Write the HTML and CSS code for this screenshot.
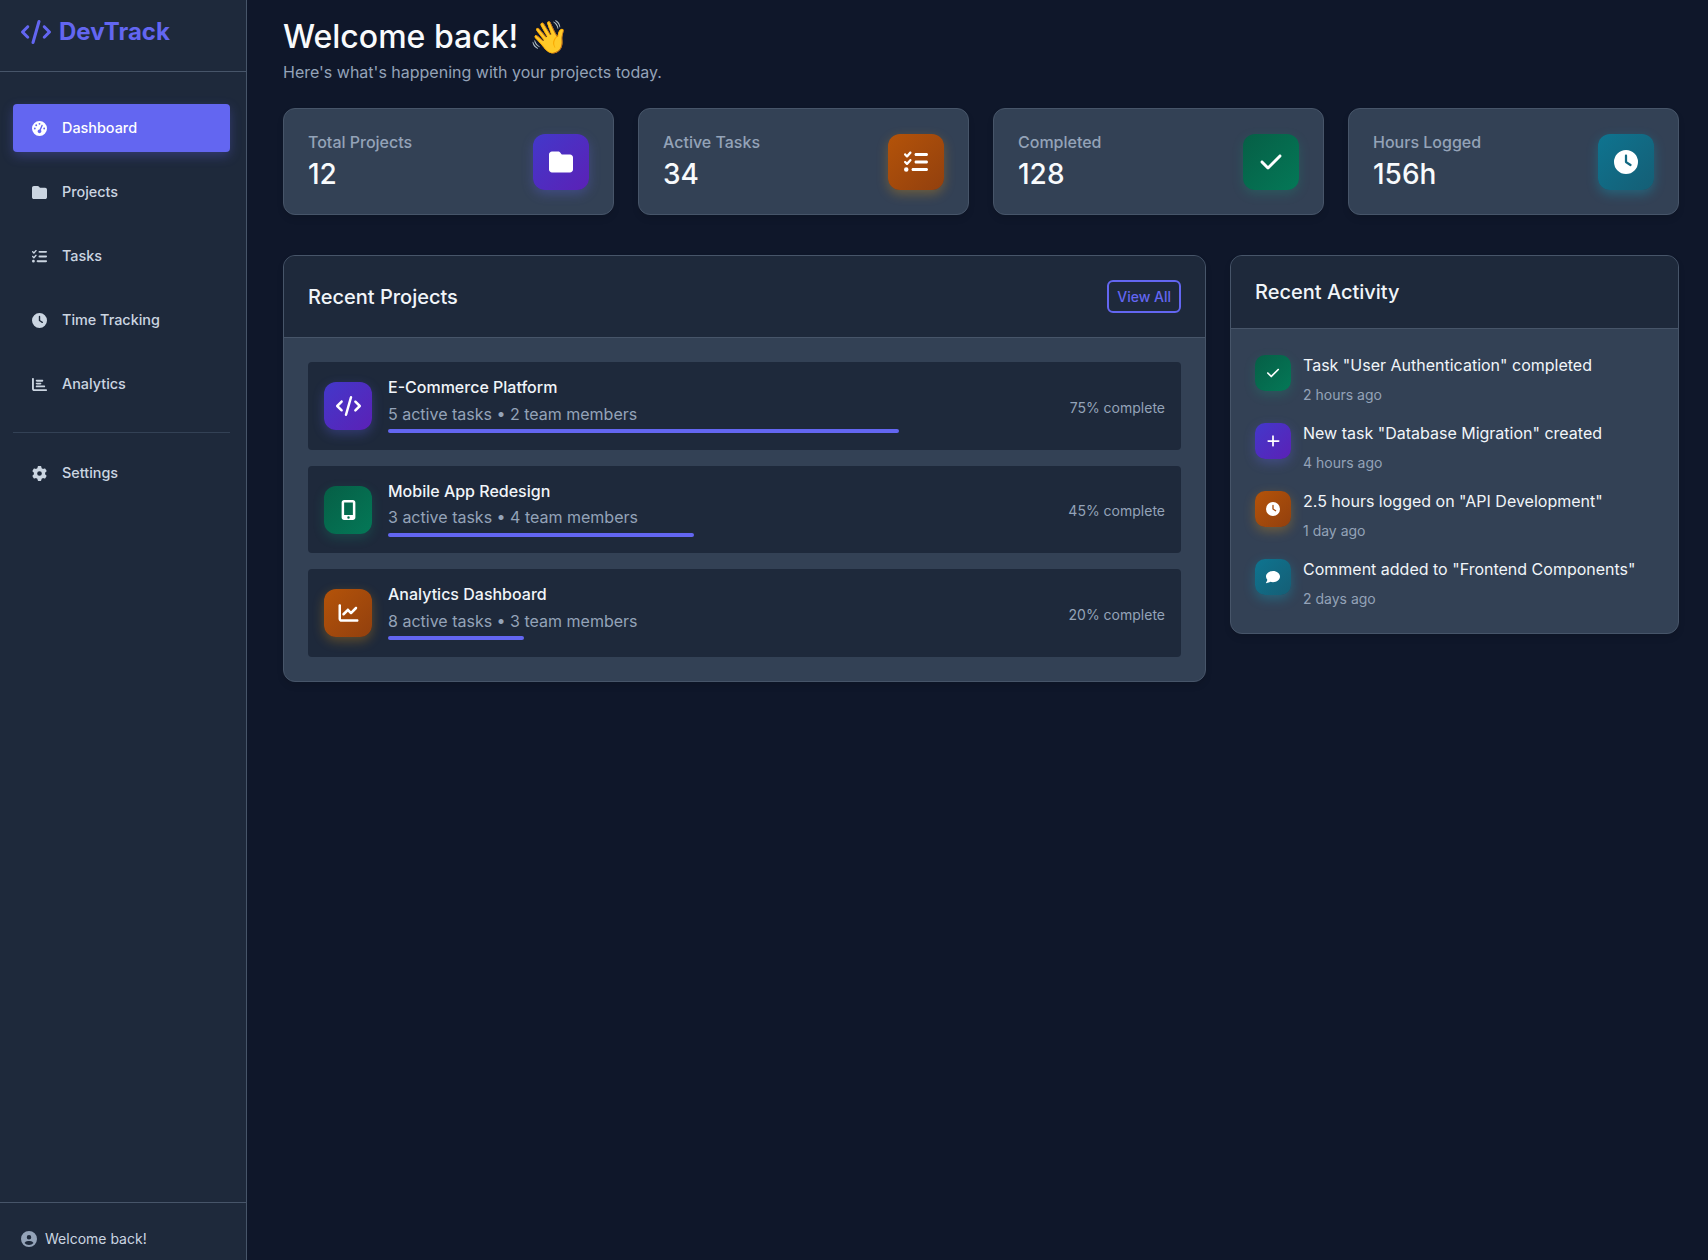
FILE: index.html
```html
<!DOCTYPE html>
<html lang="en">
<head>
    <meta charset="UTF-8">
    <meta name="viewport" content="width=device-width, initial-scale=1.0">
    <title>DevTrack</title>
    <link rel="stylesheet" href="styles.css">
</head>
<body>

<svg class="sprite" aria-hidden="true">
    <symbol id="i-code" viewBox="0 0 640 512"><path d="M392.8 1.2c-17-4.9-34.7 5-39.6 22l-128 448c-4.9 17 5 34.7 22 39.6s34.7-5 39.6-22l128-448c4.9-17-5-34.7-22-39.6zm80.6 120.1c-12.5 12.5-12.5 32.8 0 45.3L562.7 256l-89.4 89.4c-12.5 12.5-12.5 32.8 0 45.3s32.8 12.5 45.3 0l112-112c12.5-12.5 12.5-32.8 0-45.3l-112-112c-12.5-12.5-32.8-12.5-45.3 0zm-306.7 0c-12.5-12.5-32.8-12.5-45.3 0l-112 112c-12.5 12.5-12.5 32.8 0 45.3l112 112c12.5 12.5 32.8 12.5 45.3 0s12.5-32.8 0-45.3L77.3 256l89.4-89.4c12.5-12.5 12.5-32.8 0-45.3z"/></symbol>
    <symbol id="i-gauge" viewBox="0 0 512 512"><path d="M0 256a256 256 0 1 1 512 0A256 256 0 1 1 0 256zM288 96a32 32 0 1 0 -64 0 32 32 0 1 0 64 0zM256 416c35.3 0 64-28.7 64-64c0-17.4-6.9-33.1-18.1-44.6L366 161.7c5.3-12.1-.2-26.3-12.3-31.6s-26.3 .2-31.6 12.3L257.9 288c-.6 0-1.3 0-1.9 0c-35.3 0-64 28.7-64 64s28.7 64 64 64zM176 144a32 32 0 1 0 -64 0 32 32 0 1 0 64 0zM96 288a32 32 0 1 0 0-64 32 32 0 1 0 0 64zm352-32a32 32 0 1 0 -64 0 32 32 0 1 0 64 0z"/></symbol>
    <symbol id="i-folder" viewBox="0 0 512 512"><path d="M64 480H448c35.3 0 64-28.7 64-64V160c0-35.3-28.7-64-64-64H288c-10.1 0-19.6-4.7-25.6-12.8L243.2 57.6C231.1 41.5 212.1 32 192 32H64C28.7 32 0 60.7 0 96V416c0 35.3 28.7 64 64 64z"/></symbol>
    <symbol id="i-tasks" viewBox="0 0 512 512"><path d="M152.1 38.2c9.9 8.9 10.7 24 1.8 33.9l-72 80c-4.4 4.9-10.6 7.8-17.2 7.9s-12.9-2.4-17.6-7L7 113C-2.3 103.6-2.3 88.4 7 79s24.6-9.4 33.9 0l22.1 22.1 55.1-61.2c8.9-9.9 24-10.7 33.9-1.8zm0 160c9.9 8.9 10.7 24 1.8 33.9l-72 80c-4.4 4.9-10.6 7.8-17.2 7.9s-12.9-2.4-17.6-7L7 273c-9.4-9.4-9.4-24.6 0-33.9s24.6-9.4 33.9 0l22.1 22.1 55.1-61.2c8.9-9.9 24-10.7 33.9-1.8zM224 96c0-17.7 14.3-32 32-32H480c17.7 0 32 14.3 32 32s-14.3 32-32 32H256c-17.7 0-32-14.3-32-32zm0 160c0-17.7 14.3-32 32-32H480c17.7 0 32 14.3 32 32s-14.3 32-32 32H256c-17.7 0-32-14.3-32-32zM160 416c0-17.7 14.3-32 32-32H480c17.7 0 32 14.3 32 32s-14.3 32-32 32H192c-17.7 0-32-14.3-32-32zM48 368a48 48 0 1 1 0 96 48 48 0 1 1 0-96z"/></symbol>
    <symbol id="i-clock" viewBox="0 0 512 512"><path d="M256 0a256 256 0 1 1 0 512A256 256 0 1 1 256 0zM232 120V256c0 8 4 15.5 10.7 20l96 64c11 7.4 25.9 4.4 33.3-6.7s4.4-25.9-6.7-33.3L280 243.2V120c0-13.3-10.7-24-24-24s-24 10.7-24 24z"/></symbol>
    <symbol id="i-bars" viewBox="0 0 512 512"><path d="M32 32c17.7 0 32 14.3 32 32V400c0 8.8 7.2 16 16 16H480c17.7 0 32 14.3 32 32s-14.3 32-32 32H80c-44.2 0-80-35.8-80-80V64C0 46.3 14.3 32 32 32zm96 96c0-17.7 14.3-32 32-32l192 0c17.7 0 32 14.3 32 32s-14.3 32-32 32l-192 0c-17.7 0-32-14.3-32-32zm32 64H288c17.7 0 32 14.3 32 32s-14.3 32-32 32H160c-17.7 0-32-14.3-32-32s14.3-32 32-32zm0 96H416c17.7 0 32 14.3 32 32s-14.3 32-32 32H160c-17.7 0-32-14.3-32-32s14.3-32 32-32z"/></symbol>
    <symbol id="i-gear" viewBox="0 0 512 512"><path d="M495.9 166.6c3.2 8.7 .5 18.4-6.4 24.6l-43.3 39.4c1.1 8.3 1.7 16.8 1.7 25.4s-.6 17.1-1.7 25.4l43.3 39.4c6.9 6.2 9.6 15.9 6.4 24.6c-4.4 11.9-9.7 23.3-15.8 34.3l-4.7 8.1c-6.6 11-14 21.4-22.1 31.2c-5.9 7.2-15.7 9.6-24.5 6.8l-55.7-17.7c-13.4 10.3-28.2 18.9-44 25.4l-12.5 57.1c-2 9.1-9 16.3-18.2 17.8c-13.8 2.3-28 3.5-42.5 3.5s-28.7-1.2-42.5-3.5c-9.2-1.5-16.2-8.7-18.2-17.8l-12.5-57.1c-15.8-6.5-30.6-15.1-44-25.4L83.1 425.9c-8.8 2.8-18.6 .3-24.5-6.8c-8.1-9.8-15.5-20.2-22.1-31.2l-4.7-8.1c-6.1-11-11.4-22.4-15.8-34.3c-3.2-8.7-.5-18.4 6.4-24.6l43.3-39.4C64.6 273.1 64 264.6 64 256s.6-17.1 1.7-25.4L22.4 191.2c-6.9-6.2-9.6-15.9-6.4-24.6c4.4-11.9 9.7-23.3 15.8-34.3l4.7-8.1c6.6-11 14-21.4 22.1-31.2c5.9-7.2 15.7-9.6 24.5-6.8l55.7 17.7c13.4-10.3 28.2-18.9 44-25.4l12.5-57.1c2-9.1 9-16.3 18.2-17.8C227.3 1.2 241.5 0 256 0s28.7 1.2 42.5 3.5c9.2 1.5 16.2 8.7 18.2 17.8l12.5 57.1c15.8 6.5 30.6 15.1 44 25.4l55.7-17.7c8.8-2.8 18.6-.3 24.5 6.8c8.1 9.8 15.5 20.2 22.1 31.2l4.7 8.1c6.1 11 11.4 22.4 15.8 34.3zM256 336a80 80 0 1 0 0-160 80 80 0 1 0 0 160z"/></symbol>
    <symbol id="i-user" viewBox="0 0 512 512"><path d="M399 384.2C376.9 345.8 335.4 320 288 320H224c-47.4 0-88.9 25.8-111 64.2c35.2 39.2 86.2 63.8 143 63.8s107.8-24.7 143-63.8zM0 256a256 256 0 1 1 512 0A256 256 0 1 1 0 256zm256 16a72 72 0 1 0 0-144 72 72 0 1 0 0 144z"/></symbol>
    <symbol id="i-check" viewBox="0 0 448 512"><path d="M438.6 105.4c12.5 12.5 12.5 32.8 0 45.3l-256 256c-12.5 12.5-32.8 12.5-45.3 0l-128-128c-12.5-12.5-12.5-32.8 0-45.3s32.8-12.5 45.3 0L160 338.7 393.4 105.4c12.5-12.5 32.8-12.5 45.3 0z"/></symbol>
    <symbol id="i-mobile" viewBox="0 0 384 512"><path d="M16 64C16 28.7 44.7 0 80 0H304c35.3 0 64 28.7 64 64V448c0 35.3-28.7 64-64 64H80c-35.3 0-64-28.7-64-64V64zM224 448a32 32 0 1 0 -64 0 32 32 0 1 0 64 0zM304 64H80V384H304V64z"/></symbol>
    <symbol id="i-chart" viewBox="0 0 512 512"><path d="M64 64c0-17.7-14.3-32-32-32S0 46.3 0 64V400c0 44.2 35.8 80 80 80H480c17.7 0 32-14.3 32-32s-14.3-32-32-32H80c-8.8 0-16-7.2-16-16V64zm406.6 86.6c12.5-12.5 12.5-32.8 0-45.3s-32.8-12.5-45.3 0L320 210.7l-57.4-57.4c-12.5-12.5-32.8-12.5-45.3 0l-112 112c-12.5 12.5-12.5 32.8 0 45.3s32.8 12.5 45.3 0L240 221.3l57.4 57.4c12.5 12.5 32.8 12.5 45.3 0l128-128z"/></symbol>
    <symbol id="i-plus" viewBox="0 0 448 512"><path d="M256 80c0-17.7-14.3-32-32-32s-32 14.3-32 32V224H48c-17.7 0-32 14.3-32 32s14.3 32 32 32H192V432c0 17.7 14.3 32 32 32s32-14.3 32-32V288H432c17.7 0 32-14.3 32-32s-14.3-32-32-32H256V80z"/></symbol>
    <symbol id="i-comment" viewBox="0 0 512 512"><path d="M512 240c0 114.9-114.6 208-256 208c-37.1 0-72.3-6.4-104.1-17.9c-11.9 8.7-31.3 20.6-54.3 30.6C73.6 471.1 44.7 480 16 480c-6.5 0-12.3-3.9-14.8-9.9c-2.5-6-1.1-12.8 3.4-17.4l.3-.3c.3-.3 .7-.7 1.3-1.4c1.1-1.2 2.8-3.1 4.9-5.7c4.1-5 9.6-12.4 15.2-21.6c10-16.6 19.5-38.4 21.4-62.9C17.7 326.8 0 285.1 0 240C0 125.1 114.6 32 256 32s256 93.1 256 208z"/></symbol>
</svg>

<aside class="sidebar">
    <div class="sidebar-header">
        <svg class="logo-icon"><use href="#i-code"/></svg>
        <span class="logo-text">DevTrack</span>
    </div>

    <nav class="nav">
        <a class="nav-item active"><svg class="nav-icon"><use href="#i-gauge"/></svg>Dashboard</a>
        <a class="nav-item"><svg class="nav-icon"><use href="#i-folder"/></svg>Projects</a>
        <a class="nav-item"><svg class="nav-icon"><use href="#i-tasks"/></svg>Tasks</a>
        <a class="nav-item"><svg class="nav-icon"><use href="#i-clock"/></svg>Time Tracking</a>
        <a class="nav-item"><svg class="nav-icon"><use href="#i-bars"/></svg>Analytics</a>
        <div class="nav-divider"></div>
        <a class="nav-item"><svg class="nav-icon"><use href="#i-gear"/></svg>Settings</a>
    </nav>

    <div class="sidebar-footer">
        <svg class="footer-icon"><use href="#i-user"/></svg>
        <span>Welcome back!</span>
    </div>
</aside>

<main class="main">
    <h1 class="page-title">Welcome back! <span class="wave">👋</span></h1>
    <p class="page-subtitle">Here's what's happening with your projects today.</p>

    <section class="stats">
        <div class="stat-card">
            <div>
                <div class="stat-label">Total Projects</div>
                <div class="stat-value">12</div>
            </div>
            <div class="stat-icon purple"><svg class="icon-24"><use href="#i-folder"/></svg></div>
        </div>
        <div class="stat-card">
            <div>
                <div class="stat-label">Active Tasks</div>
                <div class="stat-value">34</div>
            </div>
            <div class="stat-icon orange"><svg class="icon-24"><use href="#i-tasks"/></svg></div>
        </div>
        <div class="stat-card">
            <div>
                <div class="stat-label">Completed</div>
                <div class="stat-value">128</div>
            </div>
            <div class="stat-icon green"><svg class="icon-24"><use href="#i-check"/></svg></div>
        </div>
        <div class="stat-card">
            <div>
                <div class="stat-label">Hours Logged</div>
                <div class="stat-value">156h</div>
            </div>
            <div class="stat-icon teal"><svg class="icon-24"><use href="#i-clock"/></svg></div>
        </div>
    </section>

    <section class="columns">
        <div class="panel">
            <div class="panel-header">
                <h2 class="panel-title with-action">Recent Projects</h2>
                <button class="btn-outline">View All</button>
            </div>
            <div class="panel-body project-list">
                <div class="project-row">
                    <div class="project-icon purple"><svg class="icon-20"><use href="#i-code"/></svg></div>
                    <div class="project-info">
                        <div class="project-name">E-Commerce Platform</div>
                        <div class="project-meta">5 active tasks • 2 team members</div>
                        <div class="progress"><div class="progress-fill" style="width: 75%"></div></div>
                    </div>
                    <div class="project-percent">75% complete</div>
                </div>
                <div class="project-row">
                    <div class="project-icon green"><svg class="icon-20"><use href="#i-mobile"/></svg></div>
                    <div class="project-info">
                        <div class="project-name">Mobile App Redesign</div>
                        <div class="project-meta">3 active tasks • 4 team members</div>
                        <div class="progress"><div class="progress-fill" style="width: 45%"></div></div>
                    </div>
                    <div class="project-percent">45% complete</div>
                </div>
                <div class="project-row">
                    <div class="project-icon orange"><svg class="icon-20"><use href="#i-chart"/></svg></div>
                    <div class="project-info">
                        <div class="project-name">Analytics Dashboard</div>
                        <div class="project-meta">8 active tasks • 3 team members</div>
                        <div class="progress"><div class="progress-fill" style="width: 20%"></div></div>
                    </div>
                    <div class="project-percent">20% complete</div>
                </div>
            </div>
        </div>

        <div class="panel">
            <div class="panel-header">
                <h2 class="panel-title">Recent Activity</h2>
            </div>
            <div class="panel-body activity-list">
                <div class="activity-item">
                    <div class="activity-icon green"><svg class="icon-14"><use href="#i-check"/></svg></div>
                    <div>
                        <div class="activity-text">Task "User Authentication" completed</div>
                        <div class="activity-time">2 hours ago</div>
                    </div>
                </div>
                <div class="activity-item">
                    <div class="activity-icon purple"><svg class="icon-14"><use href="#i-plus"/></svg></div>
                    <div>
                        <div class="activity-text">New task "Database Migration" created</div>
                        <div class="activity-time">4 hours ago</div>
                    </div>
                </div>
                <div class="activity-item">
                    <div class="activity-icon orange"><svg class="icon-14"><use href="#i-clock"/></svg></div>
                    <div>
                        <div class="activity-text">2.5 hours logged on "API Development"</div>
                        <div class="activity-time">1 day ago</div>
                    </div>
                </div>
                <div class="activity-item">
                    <div class="activity-icon teal"><svg class="icon-14"><use href="#i-comment"/></svg></div>
                    <div>
                        <div class="activity-text">Comment added to "Frontend Components"</div>
                        <div class="activity-time">2 days ago</div>
                    </div>
                </div>
            </div>
        </div>
    </section>
</main>

</body>
</html>
```

FILE: styles.css
```css
/* page */
* {
    box-sizing: border-box;
}

body {
    margin: 0;
    height: 100vh;
    display: flex;
    overflow: hidden;
    font-family: Inter, "Noto Sans", sans-serif;
    line-height: 1.6;
    background-color: #0f172a;
    color: #f1f5f9;
}

.sprite {
    display: none;
}

svg {
    fill: currentColor;
    flex-shrink: 0;
}

/* sidebar */
.sidebar {
    width: 247px;
    flex-shrink: 0;
    display: flex;
    flex-direction: column;
    background-color: #1e293b;
    border-right: 1px solid #475569;
}

.sidebar-header {
    display: flex;
    align-items: center;
    gap: 8px;
    height: 72px;
    padding: 0 20px 7px 21px;
    border-bottom: 1px solid #475569;
    color: #6366f1;
}

.logo-icon {
    width: 30px;
    height: 24px;
}

.logo-text {
    font-size: 24px;
    font-weight: 700;
}

.nav {
    padding: 32px 16px 0 13px;
}

.nav-item {
    display: flex;
    align-items: center;
    gap: 15px;
    height: 48px;
    margin-bottom: 16px;
    padding: 0 19px;
    border-radius: 4px;
    font-size: 14.4px;
    font-weight: 500;
    color: #cbd5e1;
}

.nav-item.active {
    background-color: #6366f1;
    color: #fff;
    box-shadow: 0 4px 12px rgba(99, 102, 241, 0.3);
}

.nav-icon {
    width: 15px;
    height: 15px;
}

.nav-divider {
    height: 1px;
    margin: 24px 0 16px;
    background-color: #334155;
}

.sidebar-footer {
    margin-top: auto;
    display: flex;
    align-items: center;
    gap: 8px;
    height: 58px;
    padding: 15px 21px 0;
    border-top: 1px solid #475569;
    font-size: 14px;
    color: #cbd5e1;
}

.footer-icon {
    width: 16px;
    height: 16px;
    color: #94a3b8;
}

/* main area */
.main {
    flex: 1;
    min-width: 0;
    padding: 11px 29px 0 36px;
}

.page-title {
    margin: 0 0 -2px;
    font-size: 32px;
    font-weight: 500;
    line-height: 1.6;
    color: #f8fafc;
}

.wave {
    margin-left: 2px;
}

.page-subtitle {
    margin: 0 0 22.4px;
    font-size: 16px;
    color: #94a3b8;
}

/* stat cards */
.stats {
    display: grid;
    grid-template-columns: repeat(4, 1fr);
    gap: 24px;
    margin-bottom: 39.8px;
}

.stat-card {
    display: flex;
    justify-content: space-between;
    align-items: flex-start;
    padding: 25px 24px 24px;
    background-color: #334155;
    border: 1px solid #475569;
    border-radius: 12px;
    box-shadow: 0 4px 6px rgba(0, 0, 0, 0.1);
}

.stat-label {
    font-size: 16px;
    font-weight: 500;
    line-height: 16px;
    color: #94a3b8;
}

.stat-value {
    margin: 6px 0 -2px;
    font-size: 28px;
    font-weight: 500;
    line-height: 36px;
    color: #f8fafc;
}

.stat-icon,
.project-icon,
.activity-icon {
    display: flex;
    align-items: center;
    justify-content: center;
    flex-shrink: 0;
    color: #fff;
}

.stat-icon {
    width: 56px;
    height: 56px;
    border-radius: 12px;
}

.icon-24 {
    width: 24px;
    height: 24px;
}

.icon-20 {
    width: 25px;
    height: 20px;
}

.icon-14 {
    width: 14px;
    height: 14px;
}

/* accent colours */
.purple {
    background: linear-gradient(135deg, #4338ca, #5b21b6);
    box-shadow: 0 4px 12px rgba(99, 102, 241, 0.3);
}

.green {
    background: linear-gradient(135deg, #065f46, #047857);
    box-shadow: 0 4px 12px rgba(16, 185, 129, 0.2);
}

.orange {
    background: linear-gradient(135deg, #b45309, #92400e);
    box-shadow: 0 4px 12px rgba(245, 158, 11, 0.3);
}

.teal {
    background: linear-gradient(135deg, #0e7490, #155e75);
    box-shadow: 0 4px 12px rgba(6, 182, 212, 0.3);
}

/* panels */
.columns {
    display: grid;
    grid-template-columns: 1fr 449px;
    gap: 24px;
    align-items: start;
}

.panel {
    background-color: #334155;
    border: 1px solid #475569;
    border-radius: 12px;
    overflow: hidden;
    box-shadow: 0 4px 6px rgba(0, 0, 0, 0.1);
}

.panel-header {
    display: flex;
    justify-content: space-between;
    align-items: center;
    padding: 24px;
    background-color: #1e293b;
    border-bottom: 1px solid #475569;
}

.panel-title {
    margin: 0;
    font-size: 20px;
    font-weight: 500;
    line-height: 24px;
    color: #f1f5f9;
}

.panel-title.with-action {
    padding-top: 2px;
}

.btn-outline {
    height: 33px;
    padding: 0 8px;
    background: transparent;
    border: 2px solid #6366f1;
    border-radius: 6px;
    font-family: inherit;
    font-size: 14px;
    font-weight: 500;
    color: #6366f1;
}

.panel-body {
    padding: 24px;
}

/* projects */
.project-list {
    display: flex;
    flex-direction: column;
    gap: 16px;
}

.project-row {
    display: flex;
    align-items: center;
    padding: 13px 16px 16.4px;
    background-color: #1e293b;
    border-radius: 4px;
}

.project-icon {
    width: 48px;
    height: 48px;
    margin: 4px 16px 0 0;
    border-radius: 12px;
}

.project-info {
    flex: 1;
    min-width: 0;
}

.project-name {
    font-size: 16px;
    font-weight: 500;
    color: #f1f5f9;
}

.project-meta {
    margin-top: 1px;
    font-size: 16px;
    color: #94a3b8;
}

.progress {
    height: 4px;
    margin-top: 2px;
    border-radius: 2px;
}

.progress-fill {
    height: 100%;
    border-radius: 2px;
    background-color: #6366f1;
}

.project-percent {
    margin-top: 8px;
    font-size: 14px;
    color: #94a3b8;
}

/* activity */
.activity-list {
    display: flex;
    flex-direction: column;
    gap: 16px;
}

.activity-item {
    display: flex;
    gap: 12px;
}

.activity-icon {
    width: 36px;
    height: 36px;
    margin-top: 2px;
    border-radius: 10px;
}

.activity-text {
    font-size: 16px;
    color: #f1f5f9;
}

.activity-time {
    margin: 5px 0 -1px;
    font-size: 14px;
    color: #94a3b8;
}
```
